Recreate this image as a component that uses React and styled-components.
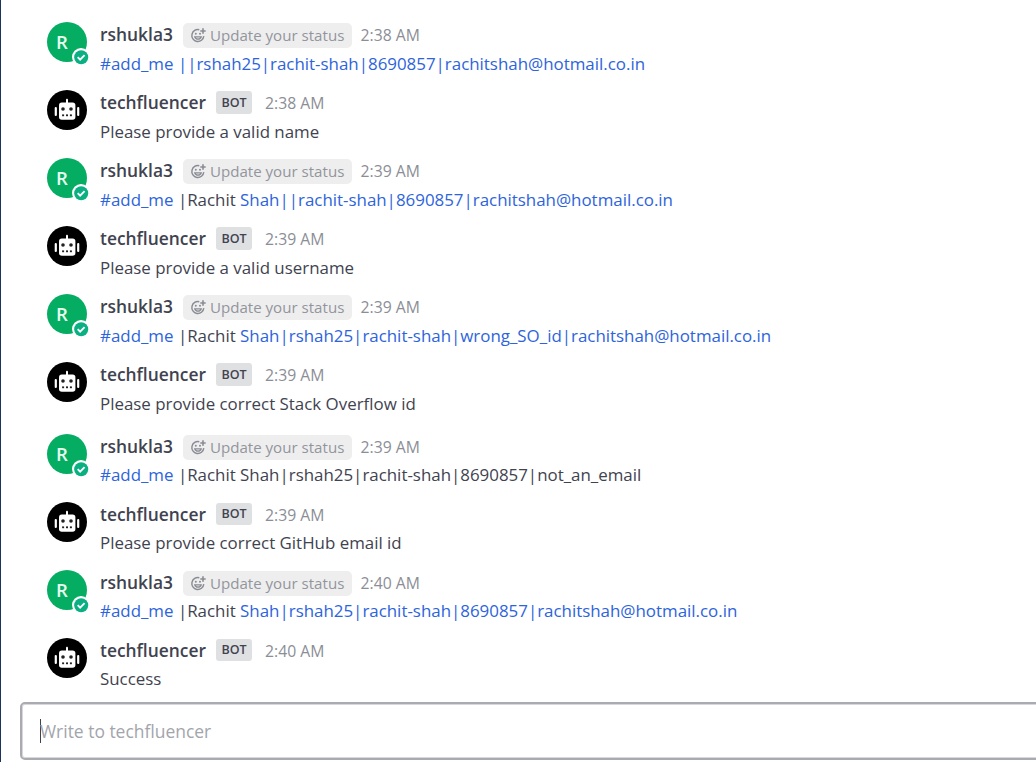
import React from 'react';
import styled, { createGlobalStyle } from 'styled-components';

const GlobalStyle = createGlobalStyle`
  * { box-sizing: border-box; }
  body { margin: 0; background: #fff; overflow: hidden; }
`;

const Channel = styled.main`
  width: 100%;
  height: 762px;
  display: flex;
  flex-direction: column;
  border-left: 1px solid #1e325c;
  background: #fff;
  color: #3f4350;
  font-family: 'Open Sans', sans-serif;
  font-size: 16.9px;
  overflow: hidden;
`;

const PostList = styled.section`
  height: 702px;
  padding: 22px 0 0 46px;
`;

const PostRow = styled.article`
  display: flex;
  gap: 13px;
  height: ${(p) => (p.$gap ? 72 : 68)}px;
`;

const Avatar = styled.div`
  position: relative;
  flex: none;
  width: 40px;
  height: 40px;
  border-radius: 50%;
  background: ${(p) => (p.$bot ? '#000' : '#05ad63')};

  > svg { display: block; }
`;

const Initial = styled.span`
  display: block;
  width: 30px;
  text-align: center;
  color: #e6fff2;
  font: 600 18.5px/39px 'Open Sans', sans-serif;
`;

const Presence = styled.svg`
  position: absolute;
  left: 25px;
  top: 26px;
`;

const Content = styled.div`
  min-width: 0;
  white-space: nowrap;
`;

const Header = styled.header`
  display: flex;
  align-items: center;
  height: 26px;
`;

const Name = styled.strong`
  font-weight: 600;
  font-size: 17.4px;
  line-height: 24px;
  margin: 0 10px 2px 0;
`;

const Status = styled.span`
  display: flex;
  align-items: center;
  gap: 3px;
  width: 169px;
  height: 25px;
  padding-left: 7px;
  margin-right: 8.6px;
  border-radius: 5px;
  background: #eeeeef;
  color: #93959c;
  font-size: 15.1px;
`;

const BotTag = styled.span`
  width: 36px;
  height: ${(p) => (p.$tight ? 22 : 23)}px;
  margin: 0 13px ${(p) => (p.$tight ? 2 : 1)}px 0;
  border-radius: 3px;
  background: #dfe0e2;
  text-align: center;
  font-size: 12.5px;
  font-weight: 600;
  line-height: ${(p) => (p.$tight ? 22 : 23)}px;
`;

const Time = styled.time`
  color: #8b8e96;
  font-size: 15.75px;
`;

const Message = styled.p`
  margin: ${(p) => (p.$tight ? 2 : 3)}px 0 0;
  line-height: 26px;
`;

const Link = styled.span`
  color: #2d64dc;
`;

const Composer = styled.div`
  display: flex;
  align-items: center;
  flex: none;
  height: 58px;
  margin: 0 -8px 0 19px;
  padding-left: 18px;
  border: 2px solid #aaabb1;
  border-radius: 5px;
  box-shadow: inset 0 0 0 1px #d7d8dc;
  color: #a3a5ac;
  font-size: 17.45px;
`;

const Caret = styled.i`
  width: 1px;
  height: 24px;
  margin-right: -1px;
  background: #3f4350;
`;

const SmileIcon = () => (
  <svg width="17" height="17" viewBox="0 0 17 17" fill="none" stroke="#898c94" strokeWidth="1.45">
    <path d="M9.3 2.7A6 6 0 1 0 13.8 9.2" />
    <path d="M13 1.3v5.4M10.3 4h5.4" strokeWidth="1.6" />
    <path d="M4.7 9.8h6.6c-.5 1.6-1.7 2.4-3.3 2.4s-2.8-.8-3.3-2.4Z" strokeWidth="1.2" />
    <circle cx="5.8" cy="6.8" r="1" fill="#898c94" stroke="none" />
    <circle cx="10" cy="6.8" r="1" fill="#898c94" stroke="none" />
  </svg>
);

const RobotIcon = () => (
  <svg width="40" height="40" viewBox="0 0 40 40">
    <g fill="#fff">
      <rect x="12" y="12.6" width="16.4" height="17.2" rx="2.8" />
      <rect x="19" y="8.8" width="2" height="5" rx=".9" />
      <rect x="7.7" y="17" width="2.2" height="9" rx="1" />
      <rect x="30.1" y="17" width="2.2" height="9" rx="1" />
    </g>
    <g fill="#222">
      <circle cx="16" cy="19" r="1.8" />
      <circle cx="24" cy="19" r="1.8" />
      <rect x="15.1" y="24.4" width="2" height="1.8" />
      <rect x="19" y="24.4" width="2" height="1.8" />
      <rect x="22.9" y="24.4" width="2" height="1.8" />
    </g>
  </svg>
);

const posts = [
  { time: '2:38 AM', link: '||rshah25|rachit-shah|8690857|rachitshah@hotmail.co.in' },
  { bot: true, time: '2:38 AM', text: 'Please provide a valid name' },
  { time: '2:39 AM', text: '|Rachit ', link: 'Shah||rachit-shah|8690857|rachitshah@hotmail.co.in' },
  { bot: true, time: '2:39 AM', text: 'Please provide a valid username' },
  { time: '2:39 AM', text: '|Rachit ', link: 'Shah|rshah25|rachit-shah|wrong_SO_id|rachitshah@hotmail.co.in' },
  { bot: true, time: '2:39 AM', text: 'Please provide correct Stack Overflow id', gap: true },
  { time: '2:39 AM', text: '|Rachit Shah|rshah25|rachit-shah|8690857|not_an_email', tight: true },
  { bot: true, time: '2:39 AM', text: 'Please provide correct GitHub email id', tight: true },
  { time: '2:40 AM', text: '|Rachit ', link: 'Shah|rshah25|rachit-shah|8690857|rachitshah@hotmail.co.in', tight: true },
  { bot: true, time: '2:40 AM', text: 'Success', tight: true },
];

function Post({ bot, time, text, link, gap, tight }) {
  return (
    <PostRow $gap={gap}>
      <Avatar $bot={bot}>
        {bot ? <RobotIcon /> : <Initial>R</Initial>}
        {!bot && (
          <Presence width="18" height="18" viewBox="0 0 18 18">
            <circle cx="9" cy="9" r="9" fill="#fff" />
            <circle cx="9.2" cy="9.2" r="7" fill="#0aaf82" />
            <path d="m5.7 9.2 2.4 2.4 4.5-4.5" fill="none" stroke="#fff" strokeWidth="1.9" />
          </Presence>
        )}
      </Avatar>
      <Content>
        <Header>
          <Name>{bot ? 'techfluencer' : 'rshukla3'}</Name>
          {bot ? <BotTag $tight={tight}>BOT</BotTag> : <Status><SmileIcon />Update your status</Status>}
          <Time>{time}</Time>
        </Header>
        <Message $tight={tight}>
          {!bot && <><Link>#add_me</Link>{' '}</>}
          {text}
          {link && <Link>{link}</Link>}
        </Message>
      </Content>
    </PostRow>
  );
}

export default function App() {
  return (
    <>
      <GlobalStyle />
      <Channel>
        <PostList>
          {posts.map((post, i) => <Post key={i} {...post} />)}
        </PostList>
        <Composer><Caret />Write to techfluencer</Composer>
      </Channel>
    </>
  );
}
